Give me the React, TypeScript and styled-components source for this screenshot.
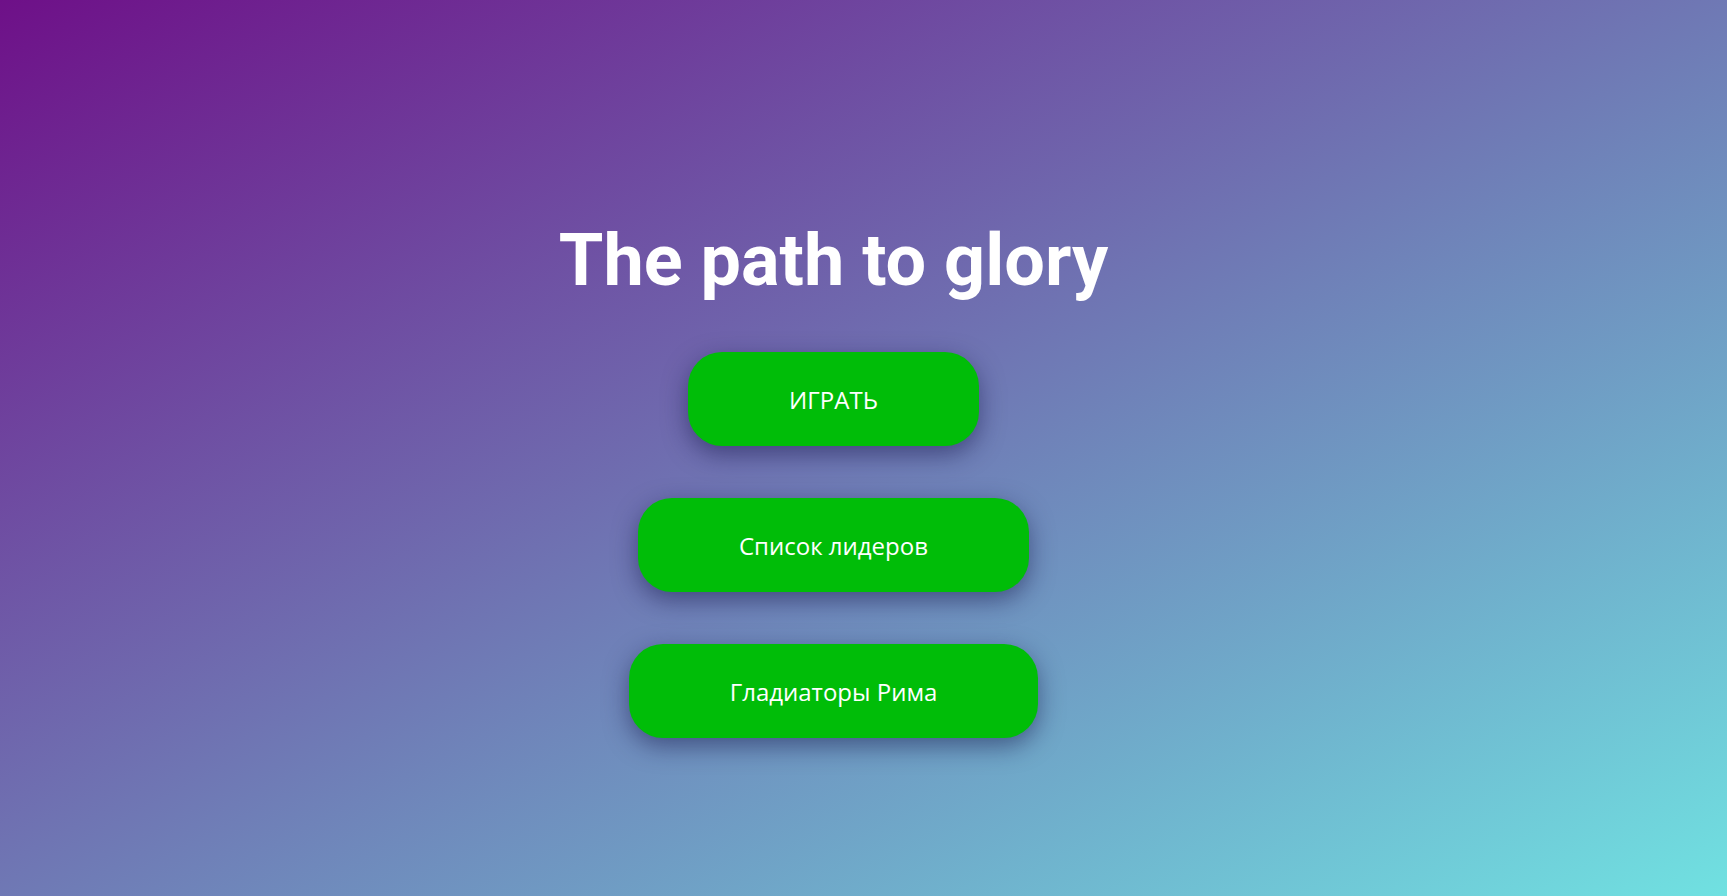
import styled, { createGlobalStyle } from "styled-components";

const GlobalStyle = createGlobalStyle`
  html, body {
    margin: 0;
    padding: 0;
  }

  body {
    font-family: "Open Sans", "Noto Sans", sans-serif;
  }
`;

const Page = styled.div`
  min-height: 100vh;
  width: 100%;
  box-sizing: border-box;
  background: linear-gradient(to bottom right, #6e1088, #70e1e1);
  display: flex;
  flex-direction: column;
  align-items: center;
  padding: 219px 60px 0 0;
  gap: 49px;
`;

const Title = styled.h1`
  margin: 0;
  color: #ffffff;
  font-family: Roboto, "Liberation Sans", sans-serif;
  font-weight: 700;
  font-size: 72px;
  line-height: 84px;
`;

const Menu = styled.div`
  display: flex;
  flex-direction: column;
  align-items: center;
  gap: 52px;
`;

const MenuButton = styled.button`
  height: 94px;
  padding: 0 101px;
  border: none;
  border-radius: 34px;
  background-color: #00bd08;
  color: #ffffff;
  font-family: "Open Sans", "Noto Sans", sans-serif;
  font-size: 24px;
  cursor: pointer;
  box-shadow: 0 8px 24px rgba(20, 20, 70, 0.5);

  &:hover {
    background-color: #00a807;
  }
`;

const items = ["ИГРАТЬ", "Список лидеров", "Гладиаторы Рима"];

export default function App() {
  return (
    <>
      <GlobalStyle />
      <Page>
        <Title>The path to glory</Title>
        <Menu>
          {items.map((label) => (
            <MenuButton key={label}>{label}</MenuButton>
          ))}
        </Menu>
      </Page>
    </>
  );
}
